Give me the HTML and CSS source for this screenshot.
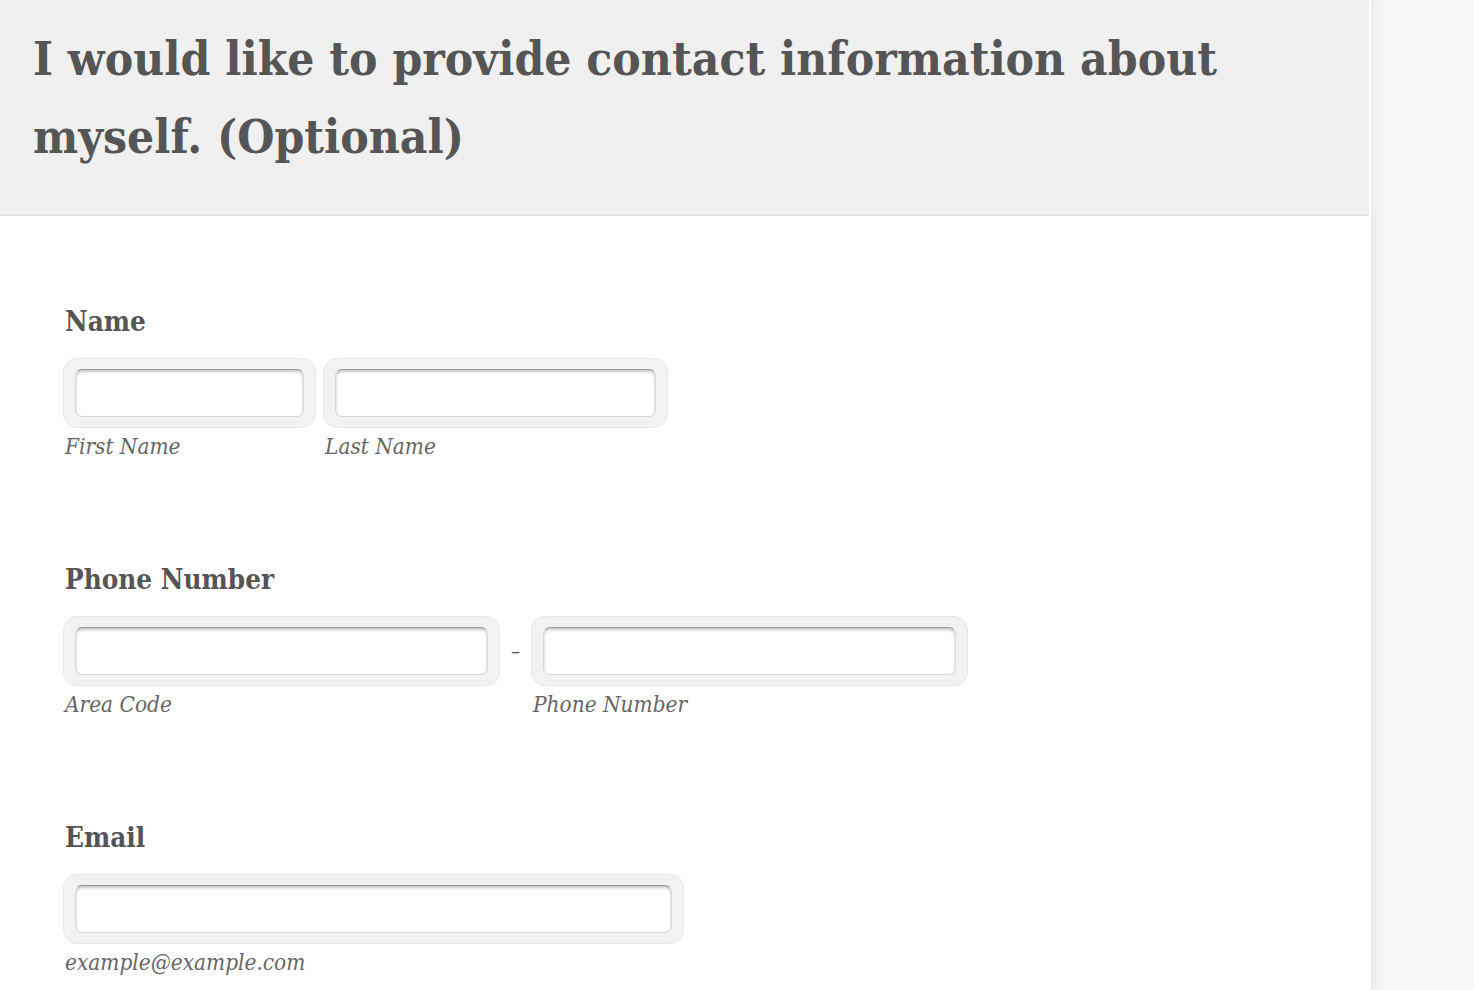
FILE: index.html
```html
<!DOCTYPE html>
<html>
<head>
<meta charset="utf-8">
<link rel="stylesheet" href="styles.css">
</head>
<body>
<div class="layout">
  <main class="form-panel">
    <header class="form-header">
      <h1 class="form-title">I would like to provide contact information about myself. (Optional)</h1>
    </header>
    <section class="form-body">
      <div class="field">
        <label class="field-label">Name</label>
        <div class="field-row">
          <div class="sub">
            <div class="input-wrap w-first"><input class="input" type="text"></div>
            <span class="sub-label">First Name</span>
          </div>
          <div class="sub">
            <div class="input-wrap w-last"><input class="input" type="text"></div>
            <span class="sub-label">Last Name</span>
          </div>
        </div>
      </div>
      <div class="field">
        <label class="field-label">Phone Number</label>
        <div class="field-row phone-row">
          <div class="sub">
            <div class="input-wrap w-area"><input class="input" type="text"></div>
            <span class="sub-label">Area Code</span>
          </div>
          <span class="dash">–</span>
          <div class="sub">
            <div class="input-wrap w-phone"><input class="input" type="text"></div>
            <span class="sub-label">Phone Number</span>
          </div>
        </div>
      </div>
      <div class="field">
        <label class="field-label">Email</label>
        <div class="field-row">
          <div class="sub">
            <div class="input-wrap w-email"><input class="input" type="text"></div>
            <span class="sub-label">example@example.com</span>
          </div>
        </div>
      </div>
    </section>
  </main>
  <aside class="side-strip"></aside>
</div>
</body>
</html>
```

FILE: styles.css
```css
html, body {
  margin: 0;
  padding: 0;
  height: 100%;
}
body {
  background: #f8f8f8;
  font-family: "DejaVu Serif Condensed", "DejaVu Serif", serif;
  color: #555;
  overflow: hidden;
}
.layout {
  display: flex;
  height: 990px;
  overflow: hidden;
}
.form-panel {
  width: 1369px;
  flex: 0 0 1369px;
  background: #fff;
  border-right: 2px solid #fff;
}
.side-strip {
  flex: 1;
  background: #f8f8f8;
  box-shadow: inset 12px 0 12px -8px rgba(0,0,0,0.07);
}
.form-header {
  background: #f0f0f0;
  border-bottom: 2px solid #e4e4e4;
  height: 216px;
  box-sizing: border-box;
  padding: 19px 33px 0 33px;
}
.form-title {
  margin: 0;
  font-size: 47.5px;
  line-height: 78px;
  font-weight: bold;
  color: #555;
}
.form-body {
  padding: 90px 0 0 63px;
}
.field {
  height: 258px;
}
.field-label {
  display: block;
  font-size: 27.6px;
  font-weight: bold;
  line-height: 32px;
  margin: 0 0 20px 2px;
  color: #555;
}
.field-row {
  display: flex;
  align-items: flex-start;
  gap: 7px;
}
.phone-row {
  gap: 0;
}
.sub {
  display: flex;
  flex-direction: column;
}
.input-wrap {
  box-sizing: border-box;
  height: 70px;
  padding: 10px 11px;
  background: #f2f2f2;
  border: 1px solid #e6e6e6;
  border-radius: 14px;
}
.w-first { width: 253px; }
.w-last { width: 345px; }
.w-area { width: 437px; }
.w-phone { width: 437px; }
.w-email { width: 621px; }
.input {
  display: block;
  box-sizing: border-box;
  width: 100%;
  height: 48px;
  margin: 0;
  padding: 0 8px;
  background: #fff;
  border: 1px solid #d8d8d8;
  border-top-color: #999;
  border-radius: 7px;
  box-shadow: inset 0 2px 3px rgba(0,0,0,0.22);
  outline: none;
}
.sub-label {
  display: block;
  margin: 4px 0 0 2px;
  font-style: italic;
  font-size: 22.4px;
  line-height: 28px;
  color: #666;
}
.dash {
  width: 31px;
  text-align: center;
  font-size: 20px;
  line-height: 70px;
  color: #555;
}
```
